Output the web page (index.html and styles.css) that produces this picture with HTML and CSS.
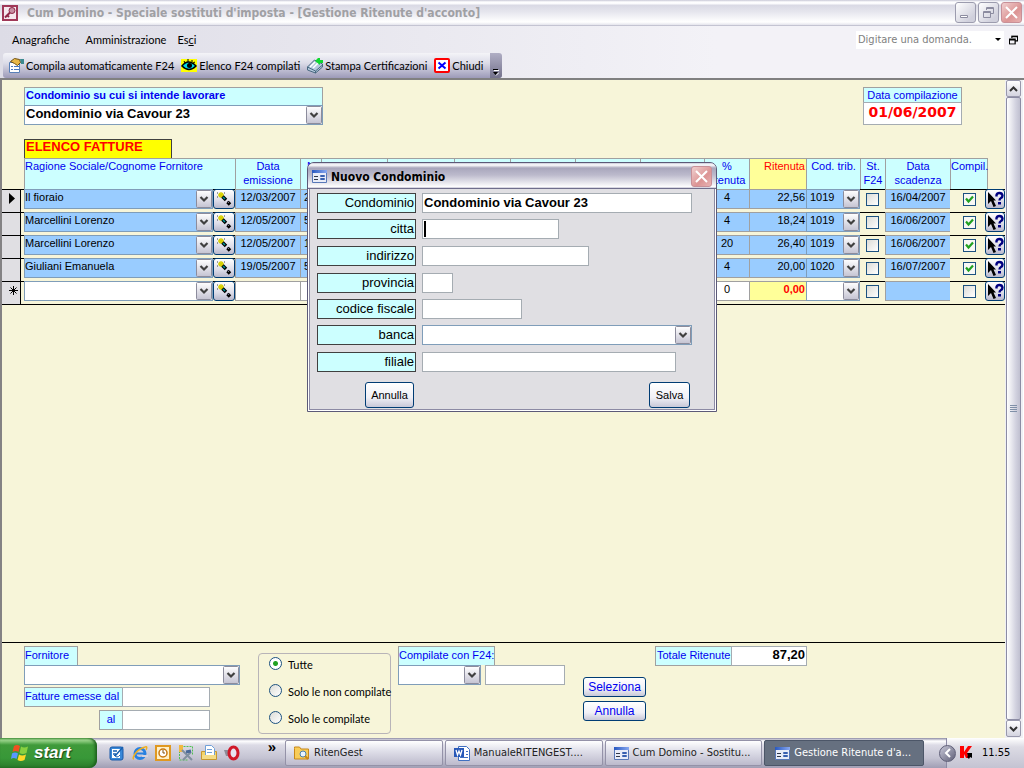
FILE: index.html
```html
<!DOCTYPE html>
<html lang="it">
<head>
<meta charset="utf-8">
<title>Cum Domino - Speciale sostituti d'imposta</title>
<link rel="stylesheet" href="styles.css">
</head>
<body>
<svg class="defs" width="0" height="0" aria-hidden="true">
  <defs>
    <linearGradient id="formbar" x1="0" x2="1" y1="0" y2="0"><stop offset="0" stop-color="#2858c0"/><stop offset="1" stop-color="#88a8f0"/></linearGradient>
    <symbol id="i-form" viewBox="0 0 15 13"><path fill="#e8ecf8" stroke="#5878b8" d="M.5.5h14v12H.5z"/><path fill="url(#formbar)" d="M0 0h15v3H0z"/><path stroke="#303848" d="M2 6.500h4M2 9.500h4"/><path fill="#fff" stroke="#3860b0" d="M8.500 5.500h4v1h-4zM8.500 8.500h4v1h-4z"/></symbol>
    <symbol id="i-wand" viewBox="0 0 16 14"><path stroke="#d8d000" stroke-width="1.300" d="M5 0v6M2 3h6M3 1l4 4M7 1 3 5"/><path stroke="#444" d="M1 1h1M1 5h1M8 1h1"/><path stroke="#000" stroke-width="3.500" d="m6.500 4.500 3.500 3.500M11.500 10l2.500 2.500"/><path stroke="#00989c" stroke-width="1.500" d="m7 5 2 2"/><path stroke="#70708c" d="m11 9 2 2"/></symbol>
    <symbol id="i-help" viewBox="0 0 17 17"><path fill="#000" d="M1 1v12l3-3 2.500 6 2.500-1-2.500-5.500H9z"/><path fill="none" stroke="#000080" stroke-width="2.400" d="M9.500 5.500V4q.5-2 3-2t3 2.500q0 1.800-1.500 2.500t-1.500 2.500"/><path fill="#000080" d="M11 11h3v2.500h-3z"/></symbol>
    <symbol id="i-restore" viewBox="0 0 11 11"><path fill="none" stroke="currentColor" d="M3.500 3V.5h7v6H8M3 1.500h7M.5 4.500h7v6h-7zM0 5.500h8"/></symbol>
  </defs>
</svg>

<header class="titlebar">
  <svg width="16" height="16" viewBox="0 0 16 16"><path fill="#f6e8ee" stroke="#a03858" stroke-width="2" d="M1 1h14v14H1z"/><circle cx="10" cy="5.500" r="3" fill="#c890a4" stroke="#902848"/><path stroke="#902848" stroke-width="2" d="m8 7.500-5 5M5 10l2 2"/></svg>
  <h1>Cum Domino - Speciale sostituti d'imposta - [Gestione Ritenute d'acconto]</h1>
  <div class="winbtns">
    <button aria-label="Riduci"><svg width="15" height="15"><path fill="#fff" stroke="#8c8ca0" d="M2.500 10.500h7v2h-7z"/></svg></button>
    <button aria-label="Ripristina"><svg width="11" height="11"><use href="#i-restore"/></svg></button>
    <button class="close" aria-label="Chiudi finestra"><svg width="13" height="13"><path stroke="#fff" stroke-width="2" d="m1 1 11 11M12 1 1 12"/></svg></button>
  </div>
</header>

<div class="bars">
  <nav class="menubar">
    <a href="#">Anagrafiche</a><a href="#">Amministrazione</a><a href="#">Es<u>c</u>i</a>
    <input class="ask" type="text" aria-label="Domanda" placeholder="Digitare una domanda.">
    <span class="askarrow"></span>
    <svg class="mdirestore" width="9" height="10" viewBox="0 0 11 11"><use href="#i-restore"/></svg>
  </nav>
  <div class="toolbar">
    <button><svg width="16" height="15"><path fill="#fff" stroke="#5880b8" d="M1.500 4.500h10v10h-10z"/><path stroke="#4878c0" d="M3 8.500h2M3 11.500h2M6 8.500h5M6 11.500h5"/><path fill="#e8b848" stroke="#705010" d="m2.500 3.500 4-3 5 1 1 3-3 3-3-2z"/><path fill="#3c8a90" d="M12 1h4v5h-3z"/></svg>Compila automaticamente F24</button>
    <button><svg width="16" height="13"><path fill="#ff0" d="M0 0h16v13H0z"/><path fill="#00d8e8" stroke="#000" stroke-width="1.500" d="M1 7q6-8 14 0-7 7-14 0z"/><circle cx="8.500" cy="6.500" r="2.500"/><path stroke="#000" d="m3 2 1 2M7 0v3M11 1v2M14 3l-2 1"/></svg>Elenco F24 compilati</button>
    <button><svg width="16" height="16"><path fill="#b4c8dc" stroke="#486880" d="m.5 9 7-7 8 4v3l-7 6-8-3z"/><path stroke="#fff" stroke-width="1.500" d="m3 9 5-5M6 10l5-5"/><path stroke="#486880" d="m.5 9 8 4 7-6M8.500 13v2"/><path fill="#10d830" d="M11 0h2v2h3v3h-3v2L8 3z"/></svg>Stampa Certificazioni</button>
    <button><svg width="16" height="15"><rect x="1" y="1" width="14" height="13" rx="1" fill="#fff" stroke="#f00" stroke-width="2"/><path stroke="#00f" stroke-width="2" d="m4.500 4.500 7 6M11.500 4.500l-7 6"/></svg>Chiudi</button>
    <span class="more"><svg width="6" height="7"><path fill="#000" d="M0 0h5v1H0zM0 3h5L2.500 6z"/><path stroke="#fff" d="M1 1.500h5M3 6.500l3-3"/></svg></span>
  </div>
</div>

<div class="work">
  <main>
    <section class="head">
      <div class="cond">
        <label for="cond">Condominio su cui si intende lavorare</label>
        <select id="cond"><option>Condominio via Cavour 23</option></select>
      </div>
      <div class="datec">
        <label for="datac">Data compilazione</label>
        <input id="datac" type="text" value="01/06/2007">
      </div>
    </section>

    <h2>ELENCO FATTURE</h2>
    <table class="grid">
      <colgroup><col class="c-sel"><col class="c-name"><col class="c-date"><col class="c-n"><col class="c-h1"><col class="c-h2"><col class="c-h3"><col class="c-h4"><col class="c-h4"><col class="c-h5"><col class="c-pct"><col class="c-rit"><col class="c-cod"><col class="c-st"><col class="c-scad"><col class="c-comp"><col></colgroup>
      <thead><tr>
        <td class="blank"></td><th class="left">Ragione Sociale/Cognome Fornitore</th><th>Data emissione</th><th>N</th><th></th><th></th><th></th><th></th><th></th><th class="gap"></th><th>% ritenuta</th><th class="rit">Ritenuta</th><th>Cod. trib.</th><th>St. F24</th><th>Data scadenza</th><th class="left">Compil.</th><td></td>
      </tr></thead>
      <tbody>
        <tr>
          <td class="sel"><svg width="6" height="11"><path d="M0 0v11l6-5.500z"/></svg></td>
          <td><div class="duo"><select aria-label="Fornitore 1"><option>Il fioraio</option></select><button class="tool" aria-label="Trova fornitore"><svg width="16" height="14"><use href="#i-wand"/></svg></button></div></td>
          <td><div class="box mid">12/03/2007</div></td><td><div class="box">2</div></td><td><div class="box"></div></td><td><div class="box"></div></td><td><div class="box"></div></td><td><div class="box"></div></td><td><div class="box"></div></td><td><div class="box"></div></td>
          <td><div class="box mid">4</div></td><td><div class="box num">22,56</div></td><td><select class="code" aria-label="Codice tributo 1"><option>1019</option></select></td>
          <td class="tick"><input type="checkbox" aria-label="St. F24 1"></td><td><div class="box mid">16/04/2007</div></td><td class="tick"><input type="checkbox" aria-label="Compilata 1" checked></td>
          <td><button class="tool help" aria-label="Guida"><svg width="17" height="17"><use href="#i-help"/></svg></button></td>
        </tr>
        <tr>
          <td class="sel"></td>
          <td><div class="duo"><select aria-label="Fornitore 2"><option>Marcellini Lorenzo</option></select><button class="tool" aria-label="Trova fornitore"><svg width="16" height="14"><use href="#i-wand"/></svg></button></div></td>
          <td><div class="box mid">12/05/2007</div></td><td><div class="box">5</div></td><td><div class="box"></div></td><td><div class="box"></div></td><td><div class="box"></div></td><td><div class="box"></div></td><td><div class="box"></div></td><td><div class="box"></div></td>
          <td><div class="box mid">4</div></td><td><div class="box num">18,24</div></td><td><select class="code" aria-label="Codice tributo 2"><option>1019</option></select></td>
          <td class="tick"><input type="checkbox" aria-label="St. F24 2"></td><td><div class="box mid">16/06/2007</div></td><td class="tick"><input type="checkbox" aria-label="Compilata 2" checked></td>
          <td><button class="tool help" aria-label="Guida"><svg width="17" height="17"><use href="#i-help"/></svg></button></td>
        </tr>
        <tr>
          <td class="sel"></td>
          <td><div class="duo"><select aria-label="Fornitore 3"><option>Marcellini Lorenzo</option></select><button class="tool" aria-label="Trova fornitore"><svg width="16" height="14"><use href="#i-wand"/></svg></button></div></td>
          <td><div class="box mid">12/05/2007</div></td><td><div class="box">1</div></td><td><div class="box"></div></td><td><div class="box"></div></td><td><div class="box"></div></td><td><div class="box"></div></td><td><div class="box"></div></td><td><div class="box"></div></td>
          <td><div class="box mid">20</div></td><td><div class="box num">26,40</div></td><td><select class="code" aria-label="Codice tributo 3"><option>1019</option></select></td>
          <td class="tick"><input type="checkbox" aria-label="St. F24 3"></td><td><div class="box mid">16/06/2007</div></td><td class="tick"><input type="checkbox" aria-label="Compilata 3" checked></td>
          <td><button class="tool help" aria-label="Guida"><svg width="17" height="17"><use href="#i-help"/></svg></button></td>
        </tr>
        <tr>
          <td class="sel"></td>
          <td><div class="duo"><select aria-label="Fornitore 4"><option>Giuliani Emanuela</option></select><button class="tool" aria-label="Trova fornitore"><svg width="16" height="14"><use href="#i-wand"/></svg></button></div></td>
          <td><div class="box mid">19/05/2007</div></td><td><div class="box">5</div></td><td><div class="box"></div></td><td><div class="box"></div></td><td><div class="box"></div></td><td><div class="box"></div></td><td><div class="box"></div></td><td><div class="box"></div></td>
          <td><div class="box mid">4</div></td><td><div class="box num">20,00</div></td><td><select class="code" aria-label="Codice tributo 4"><option>1020</option></select></td>
          <td class="tick"><input type="checkbox" aria-label="St. F24 4"></td><td><div class="box mid">16/07/2007</div></td><td class="tick"><input type="checkbox" aria-label="Compilata 4" checked></td>
          <td><button class="tool help" aria-label="Guida"><svg width="17" height="17"><use href="#i-help"/></svg></button></td>
        </tr>
        <tr class="new">
          <td class="sel"><svg width="9" height="9"><path stroke="#000" d="M4.500 0v9M0 4.500h9M1.500 1.500l6 6M7.500 1.500l-6 6"/></svg></td>
          <td><div class="duo"><select aria-label="Nuovo fornitore"><option></option></select><button class="tool" aria-label="Trova fornitore"><svg width="16" height="14"><use href="#i-wand"/></svg></button></div></td>
          <td><div class="box"></div></td><td><div class="box"></div></td><td><div class="box"></div></td><td><div class="box"></div></td><td><div class="box"></div></td><td><div class="box"></div></td><td><div class="box"></div></td><td><div class="box"></div></td>
          <td><div class="box mid">0</div></td><td><div class="box num zero">0,00</div></td><td><select class="code" aria-label="Nuovo codice tributo"><option></option></select></td>
          <td class="tick"><input type="checkbox" aria-label="St. F24 nuovo"></td><td><div class="box blue"></div></td><td class="tick"><input type="checkbox" aria-label="Compilata nuovo"></td>
          <td><button class="tool help" aria-label="Guida"><svg width="17" height="17"><use href="#i-help"/></svg></button></td>
        </tr>
      </tbody>
    </table>

    <footer class="filters">
      <div class="supplier">
        <label class="tag" for="forn">Fornitore</label>
        <select id="forn"><option></option></select>
        <div class="pair first"><label class="tag" for="dal">Fatture emesse dal</label><input id="dal" type="text"></div>
        <div class="pair"><label class="tag al" for="al">al</label><input id="al" type="text"></div>
      </div>
      <fieldset class="radios">
        <label><input type="radio" name="f" checked>Tutte</label>
        <label><input type="radio" name="f">Solo le non compilate</label>
        <label><input type="radio" name="f">Solo le compilate</label>
      </fieldset>
      <div class="f24">
        <label class="tag" for="f24">Compilate con F24:</label>
        <div class="pair"><select id="f24"><option></option></select><input type="text" aria-label="Data F24"></div>
      </div>
      <div class="actions"><button class="btn">Seleziona</button><button class="btn">Annulla</button></div>
      <div class="total"><label class="tag" for="tot">Totale Ritenute</label><input id="tot" type="text" value="87,20"></div>
    </footer>
  </main>
  <div class="scroll">
    <button aria-label="Su"><svg width="9" height="6"><path fill="none" stroke="#333" stroke-width="2" d="m1 5 3.500-3.500L8 5"/></svg></button>
    <div class="thumb"><i></i><i></i><i></i><i></i></div>
    <button aria-label="Giù"><svg width="9" height="6"><path fill="none" stroke="#333" stroke-width="2" d="m1 1 3.500 3.500L8 1"/></svg></button>
  </div>
</div>

<div class="dialog" role="dialog" aria-labelledby="dlg">
  <div class="dtitle">
    <svg width="15" height="13"><use href="#i-form"/></svg>
    <h2 id="dlg">Nuovo Condominio</h2>
    <button class="close" aria-label="Chiudi"><svg width="13" height="13"><path stroke="#fff" stroke-width="2" d="m1 1 11 11M12 1 1 12"/></svg></button>
  </div>
  <form class="dform">
    <label for="d1">Condominio</label><input id="d1" class="w-name" type="text" value="Condominio via Cavour 23">
    <label for="d2">citta</label><div class="city"><input id="d2" class="w-city" type="text"><span class="caret"></span></div>
    <label for="d3">indirizzo</label><input id="d3" class="w-addr" type="text">
    <label for="d4">provincia</label><input id="d4" class="w-prov" type="text">
    <label for="d5">codice fiscale</label><input id="d5" class="w-cf" type="text">
    <label for="d6">banca</label><select id="d6" class="w-name"><option></option></select>
    <label for="d7">filiale</label><input id="d7" class="w-fil" type="text">
  </form>
  <div class="dbtns"><button class="btn">Annulla</button><button class="btn">Salva</button></div>
</div>

<div class="taskbar">
  <button class="start"><svg width="18" height="18"><path fill="#f05020" d="M3 2q3-2 6 0L7.500 8Q4.500 6 1.500 8z"/><path fill="#88d040" d="M10 2.500q3 2 7 0L15.500 9q-4 2-7 0z"/><path fill="#5898ff" d="M1 9.500q3-2 6 0L5.500 15q-3-2-5.500 0z"/><path fill="#ffd828" d="M8 10.500q3 2 7 0L13.500 16q-4 2-7 0z"/></svg>start</button>
  <div class="quick">
    <svg width="16" height="16"><rect x="1" y="2" width="13" height="13" rx="2" fill="#3888d8" stroke="#1858a8"/><path fill="#fff" d="M3 4h8v9H3z"/><path stroke="#1860b0" stroke-width="1.500" d="M4 6h4M4 9h3M6 11l8-9"/><path fill="none" stroke="#1860b0" d="M5 10q3 4 6 0"/></svg>
    <svg width="16" height="16"><circle cx="8" cy="8.500" r="5" fill="none" stroke="#2880e0" stroke-width="3"/><path stroke="#2880e0" stroke-width="2" d="M4 8.500h9"/><path fill="#d4d2df" d="M10 10h6v2h-6z"/><path fill="none" stroke="#f0b020" stroke-width="1.500" d="M2 14Q0 14 3 9T13 2q3-1 1 3"/></svg>
    <svg width="16" height="16"><path fill="#fff0c8" stroke="#e09820" stroke-width="2" d="M1 1h14v14H1z"/><circle cx="8" cy="8" r="4" fill="#fff" stroke="#c87810" stroke-width="1.500"/><path fill="none" stroke="#805010" d="M8 5v3h2"/></svg>
    <svg width="16" height="16"><path fill="none" stroke="#50c050" stroke-dasharray="2 1" d="M5.500 1.500h9v9M1.500 6v9H10"/><path fill="#f0b840" d="M1 0h4v7H1z"/><path stroke="#8090a0" stroke-width="2" d="m4 5 10 10M13 7l-8 8"/><path stroke="#486898" stroke-width="3" d="m8 7 5-1"/></svg>
    <svg width="16" height="16"><path fill="#f4d468" stroke="#c89830" d="M.5 6.500h15v8H.5z"/><path fill="#fff" stroke="#70a0d8" d="M4.500.5h6l3 3v7h-9z"/><path stroke="#70a0d8" d="M6 4.500h5M6 7.500h5"/><path fill="#f4dc88" d="M1 10h14v4H1z"/></svg>
    <svg width="16" height="16"><path fill="#8c8c98" d="M0 5h7v6H2z"/><ellipse cx="9.500" cy="8" rx="4.500" ry="6" fill="#e8e4f0" stroke="#d01828" stroke-width="3"/></svg>
  </div>
  <span class="chev">»</span>
  <div class="tasks">
    <button><svg width="16" height="14"><path fill="#f8cc58" stroke="#c88818" d="M.5 2.500V1h5l1.500 2h7.500v10H.5z"/><circle cx="9" cy="8" r="3" fill="#e8f4ff" stroke="#4880b0"/><path stroke="#c88818" stroke-width="2" d="m11 10 3 3"/></svg>RitenGest</button>
    <button><svg width="16" height="15"><path fill="#fff" stroke="#4070c0" d="M4.500.5h8l3 3v11h-11z"/><path stroke="#4070c0" d="M12 5.500h2M12 8.500h2M6 11.500h8"/><path fill="#2858b8" d="M0 2h10v9H0z"/><path fill="none" stroke="#fff" stroke-width="1.300" d="m2 4 1.500 5L5 5l1.500 4L8 4"/></svg>ManualeRITENGEST....</button>
    <button><svg width="15" height="13"><use href="#i-form"/></svg>Cum Domino - Sostitu...</button>
    <button class="on"><svg width="15" height="13"><use href="#i-form"/></svg>Gestione Ritenute d'a...</button>
  </div>
  <div class="tray">
    <button class="hide" aria-label="Nascondi icone"><svg width="8" height="10"><path fill="none" stroke="#fff" stroke-width="2" d="M6 1 2 5l4 4"/></svg></button>
    <svg width="13" height="14"><path fill="#f00" d="M0 0h4v6l4-6h4L7 7l3 5H6L4 8v4H0z"/><path fill="#000" d="M7 7h5v5l-2-1-1 2-2-2 1-1z"/></svg>
    <time>11.55</time>
  </div>
</div>
</body>
</html>
```
FILE: styles.css
```css
* { box-sizing: border-box; }

:root {
  --ui: "DejaVu Sans Condensed", "DejaVu Sans", sans-serif;
  --menu: Lato, "Liberation Sans", sans-serif;
  --form: "Liberation Sans", Arial, sans-serif;
  --cream: #f7f5d9;
  --aqua: #ccffff;
  --blue: #99ccff;
  --ink: #0000f0;
  --grey: #a0a0a0;
  --face: #e0dfe3;
}

body {
  margin: 0;
  min-height: 100vh;
  display: flex;
  flex-direction: column;
  position: relative;
  font: 11px/14px var(--form);
  color: #000;
  background: var(--face);
}

.defs { position: absolute; }
svg { fill: none; flex: none; display: block; }
svg path:not([fill]):not([stroke]), svg circle:not([fill]) { fill: #000; }
button, input, select { font: inherit; color: inherit; margin: 0; padding: 0; border-radius: 0; }
button { display: flex; align-items: center; justify-content: center; border: 0; background: none; white-space: nowrap; }
h1, h2 { margin: 0; }

input[type="text"] {
  height: 20px;
  border: 1px solid #a5acb2;
  background: #fff;
  padding: 0 2px;
  min-width: 0;
  outline: 0;
}

select {
  appearance: none;
  height: 20px;
  min-width: 0;
  border: 1px solid #7f9db9;
  padding: 0 20px 0 1px;
  background: url("data:image/svg+xml,%3Csvg xmlns='http://www.w3.org/2000/svg' width='16' height='18'%3E%3Cdefs%3E%3ClinearGradient id='g' x2='0' y2='1'%3E%3Cstop stop-color='%23fff'/%3E%3Cstop offset='1' stop-color='%23c4c3d2'/%3E%3C/linearGradient%3E%3C/defs%3E%3Crect x='.5' y='.5' width='15' height='17' rx='1' fill='url(%23g)' stroke='%238c8c9c'/%3E%3Cpath d='m4.500 7 3.500 3.500L11.500 7' fill='none' stroke='%23404040' stroke-width='2.200'/%3E%3C/svg%3E") right 0 center no-repeat #fff;
}

/* Title bar and command bars */
.titlebar {
  height: 26px;
  display: flex;
  align-items: center;
  gap: 9px;
  padding: 0 2px;
  border-bottom: 1px solid #c4c4d2;
  background: linear-gradient(#c8c8d6 0, #fff 2px, #fafafc 4px, #d9d9e4 5px, #e6e6ee 12px, #fff 22px, #e4e4ec);
}
.titlebar h1 { flex: 1; font: bold 12px/18px var(--ui); color: #a0a0a4; white-space: nowrap; }
.winbtns { display: flex; gap: 2px; }
.winbtns button, .close {
  width: 21px;
  height: 21px;
  border: 1px solid #9c9cae;
  border-radius: 3px;
  color: #8c8ca0;
  background: linear-gradient(135deg, #fff, #d0d0dc 80%);
}
.winbtns .close, .close { border-color: #c89098; background: linear-gradient(135deg, #f0d0d0, #dc9494 60%, #e8b4b4); }

.bars {
  font-family: var(--menu);
  background: linear-gradient(90deg, #dddce6, #f3f2f7 70%);
  border-bottom: 2px solid #808080;
  height: 54px;
}
.menubar { display: flex; align-items: center; height: 27px; padding: 0 6px 0 12px; }
.menubar a { color: #000; text-decoration: none; margin-right: 16px; }
.menubar a:nth-child(2) { margin-right: 11px; }
.menubar .ask { margin-left: auto; width: 136px; height: 18px; border: 0; font-family: var(--ui); }
.ask::placeholder { color: #808080; opacity: 1; }
.askarrow { width: 12px; height: 18px; background: #fff; display: grid; place-items: center; margin-right: 5px; }
.askarrow::after { content: ""; border: 3px solid transparent; border-top-color: #000; border-bottom: 0; }
.mdirestore { color: #000; stroke-width: 1.5; }
.toolbar {
  display: inline-flex;
  height: 25px;
  margin-left: 3px;
  padding-left: 5px;
  border-radius: 3px;
  background: linear-gradient(#f4f4f8, #dcdce8 40%, #9c9ab8);
}
.toolbar button { gap: 2px; margin-right: 7px; }
.more {
  width: 12px;
  display: flex;
  align-items: flex-end;
  justify-content: center;
  padding-bottom: 2px;
  border-radius: 0 3px 3px 0;
  background: linear-gradient(#b0aec4, #74728c);
}

/* Work area */
.work { flex: 1; display: flex; background: var(--cream); }
main { flex: 1; min-width: 0; display: flex; flex-direction: column; border-left: 2px solid #848284; }

.head { display: flex; justify-content: space-between; padding: 7px 43px 0 22px; }
.head label { display: block; color: var(--ink); background: var(--aqua); border: 1px solid var(--grey); border-bottom: 0; padding: 0 1px; }
.cond { width: 299px; }
.cond label { font-weight: bold; height: 18px; line-height: 15px; }
.cond select { width: 100%; font-weight: bold; font-size: 13px; padding-bottom: 3px; }
.datec { width: 99px; text-align: center; }
.datec label { height: 15px; line-height: 15px; }
.datec input { width: 100%; height: 23px; text-align: center; font: bold 14px/18px "DejaVu Sans", sans-serif; color: #f00; padding: 0 0 4px; }

main > h2 {
  width: 148px;
  height: 19px;
  margin: 14px 0 0 22px;
  border: 1px solid #404040;
  border-bottom: 0;
  background: #ff0;
  color: #f00;
  font: bold 13px/14px var(--form);
  padding-left: 1px;
}

.grid { table-layout: fixed; width: 100%; border-spacing: 0; border-bottom: 1px solid #000; }
.c-sel { width: 22px; } .c-name { width: 211px; } .c-date { width: 65px; } .c-n { width: 21px; }
.c-h1 { width: 66px; } .c-h2 { width: 67px; } .c-h3 { width: 56px; } .c-h4 { width: 65px; } .c-h5 { width: 64px; }
.c-pct { width: 45px; } .c-rit { width: 57px; } .c-cod { width: 54px; } .c-st { width: 25px; }
.c-scad { width: 65px; } .c-comp { width: 38px; }
.grid td, .grid th { padding: 0; }
.grid th {
  height: 31px;
  vertical-align: top;
  font-weight: normal;
  color: var(--ink);
  background: var(--aqua);
  border: solid var(--grey);
  border-width: 1px 0 0 1px;
}
.grid th.left { text-align: left; }
.grid th.rit { background: #ffff99; color: #f00; text-align: right; padding-right: 1px; }
.grid th:nth-last-child(2) { border-right-width: 1px; }
.grid tbody tr { height: 23px; background: linear-gradient(#000, #000) 0 0 / 100% 1px no-repeat; }
.grid tbody td { height: 23px; vertical-align: top; }
.grid tbody .sel {
  vertical-align: middle;
  padding: 0 0 4px 7px;
  background: linear-gradient(#000, #000) 0 0 / 100% 1px no-repeat, linear-gradient(90deg, var(--face) 18px, #000 18px 19px, var(--cream) 19px);
}
.box, .grid select {
  display: block;
  width: 100%;
  height: 20px;
  line-height: 14px;
  border: 1px solid var(--grey);
  border-right-width: 0;
  background-color: var(--blue);
  padding: 0 3px;
}
.grid select { border: 1px solid #7f9db9; padding: 0 18px 4px 0; }
.grid select.code { padding-left: 3px; }
.box.mid { text-align: center; padding: 0; }
.box.num { text-align: right; padding-right: 1px; }
.duo { display: flex; }
.grid .duo select { flex: 1; width: auto; }
.tool { width: 22px; height: 20px; border: 1px solid #003c74; border-radius: 3px; background: linear-gradient(#fff, #dcdce8 60%, #b8b8cc); }
.tool.help { width: 20px; margin-left: -3px; }
.new .box, .grid .new select { background-color: #fff; }
.new .box.zero { background: #ffff99; color: #f00; font-weight: bold; }
.new .box.blue { background: var(--blue); }
.tick { text-align: center; }
.tick input, .radios input { appearance: none; width: 13px; height: 13px; border: 1px solid #1c5180; background: linear-gradient(135deg, #dcdcd7, #fff); }
.tick input { display: block; margin: 4px auto 0; }
.tick input:checked { background: url("data:image/svg+xml,%3Csvg xmlns='http://www.w3.org/2000/svg' width='11' height='11'%3E%3Cpath d='m2 4.500 2.500 3L9 2.500' fill='none' stroke='%2321a121' stroke-width='2.200'/%3E%3C/svg%3E") center no-repeat #f8f8f5; }

/* Filters at the foot of the form */
.filters { margin-top: auto; height: 96px; border-top: 1px solid #000; display: flex; align-items: flex-start; padding: 3px 0 0 22px; }
.tag { display: inline-block; height: 20px; line-height: 16px; color: var(--ink); background: var(--aqua); border: 1px solid var(--grey); white-space: nowrap; }
.supplier { width: 216px; display: flex; flex-direction: column; align-items: flex-start; }
.supplier > .tag { width: 54px; height: 19px; border-bottom: 0; }
.supplier select { width: 216px; }
.pair { display: flex; }
.pair.first { margin: 2px 0 3px; }
.supplier .pair .tag { width: 98px; border-right: 0; }
.supplier .pair input { width: 88px; }
.supplier .pair .al { width: 23px; margin-left: 75px; text-align: center; }
.radios { width: 133px; min-width: 0; height: 81px; margin: 7px 7px 0 18px; padding: 3px 0 0 10px; border: 1px solid #b8b4b8; border-radius: 4px; display: flex; flex-direction: column; gap: 12px; font-family: var(--menu); }
.radios label { display: flex; gap: 6px; line-height: 15px; white-space: nowrap; }
.radios input { border-radius: 50%; flex: none; }
.radios input:checked { background: radial-gradient(#21a121 0 2px, #fff 3px); }
.f24 .tag { display: block; width: 97px; height: 19px; border-bottom: 0; }
.f24 .pair { gap: 4px; }
.f24 select { width: 83px; }
.f24 input { width: 80px; }
.btn { border: 1px solid #003c74; border-radius: 3px; background: linear-gradient(#fff, #f0f0f6 60%, #c8c8d8); }
.actions { display: flex; flex-direction: column; gap: 4px; margin: 31px 9px 0 18px; color: var(--ink); font-size: 12px; }
.actions .btn { width: 63px; height: 20px; }
.total { display: flex; }
.total .tag { width: 76px; border-right: 0; padding-left: 1px; }
.total input { width: 76px; text-align: right; font: bold 13px/16px var(--form); padding: 0 1px 3px; }

/* Vertical scroll bar */
.scroll { width: 19px; display: flex; flex-direction: column; padding: 0 2px 1px 1px; background: #f0f0f4; border-right: 1px solid #fff; }
.scroll button { height: 17px; border: 1px solid #9898ac; border-radius: 2px; background: linear-gradient(#fff, #d4d4e0); }
.thumb { flex: 1; border: 1px solid #8c8ca4; border-radius: 2px; background: linear-gradient(90deg, #fff, #d0d0de 70%, #c0c0d0); display: flex; flex-direction: column; align-items: center; justify-content: center; gap: 1px; }
.thumb i { width: 7px; height: 1px; background: #8090a8; }

/* Dialog */
.dialog {
  position: absolute;
  left: 307px;
  top: 162px;
  width: 410px;
  height: 250px;
  border: 1px solid #5c5a78;
  border-radius: 7px 7px 0 0;
  background: var(--face);
  box-shadow: inset 0 0 0 1px #fff, inset 0 0 0 2px #8c8aa4;
}
.dtitle { display: flex; align-items: center; gap: 4px; height: 26px; padding: 2px 4px 0; border-bottom: 1px solid #706e8c; border-radius: 6px 6px 0 0; background: linear-gradient(#c8c8d8, #fff 2px, #a8a6bc 5px, #bcbacc 12px, #fff 24px, #b0aec4); }
.dtitle h2 { flex: 1; font: bold 12px/18px var(--ui); }
.dform { display: grid; grid-template-columns: 99px 1fr; grid-template-rows: 20px 21px 21px 20px 20px 21px 20px; column-gap: 6px; row-gap: 6px; align-items: start; padding: 4px 9px 0; font-size: 13px; }
.dform label { height: 20px; line-height: 18px; border: 1px solid #404040; background: var(--aqua); text-align: right; padding-right: 1px; }
.w-name { width: 270px; } .w-city { width: 137px; } .w-addr { width: 167px; } .w-prov { width: 31px; } .w-cf { width: 100px; } .w-fil { width: 254px; }
.dform #d1 { font-weight: bold; padding: 0 1px 1px; }
.city { position: relative; display: flex; }
.caret { position: absolute; left: 2px; top: 2px; width: 2px; height: 16px; background: #000; }
.dbtns { display: flex; justify-content: space-between; padding: 10px 26px 0 57px; }
.dbtns .btn { height: 26px; width: 49px; }
.dbtns .btn:last-child { width: 41px; }

/* Taskbar */
.taskbar { height: 30px; display: flex; align-items: stretch; font-family: var(--ui); background: linear-gradient(#8c8aa4, #fff 3px, #dcdbe6 7px, #c4c3d2 20px, #a09eb4); }
.start { width: 97px; gap: 5px; justify-content: flex-start; padding-left: 11px; color: #fff; font: italic bold 17px/20px "Liberation Sans", sans-serif; text-shadow: 1px 1px 1px #184818; border-radius: 0 8px 8px 0; background: linear-gradient(#6cb85c, #a0d890 2px, #3f9a3a 7px, #389838 20px, #2a7a2a); box-shadow: inset -2px 0 3px #1c601c; }
.quick { display: flex; align-items: center; gap: 7px; padding-left: 12px; }
.chev { font: bold 15px/18px var(--form); width: 36px; text-align: right; margin-right: 9px; }
.tasks { display: flex; flex: 1; gap: 2px; padding: 2px 22px 2px 0; min-width: 0; }
.tasks button { flex: 1; min-width: 0; justify-content: flex-start; gap: 4px; padding-left: 8px; color: #222; border: 1px solid #9492a8; border-radius: 2px; background: linear-gradient(#fff, #e0e0ea 40%, #bcbacc); }
.tasks .on { color: #fff; padding-left: 10px; border-color: #4c5668; background: #667080; }
.tray { width: 78px; display: flex; align-items: center; gap: 4px; border-left: 1px solid #8c8aa4; background: linear-gradient(#fff, #dcdbe4 30%, #c4c3d2); }
.hide { width: 17px; height: 17px; margin-left: -8px; border-radius: 50%; border: 1px solid #606078; background: linear-gradient(135deg, #c8c8d8, #606078); }
.tray time { margin-left: 5px; }
```
